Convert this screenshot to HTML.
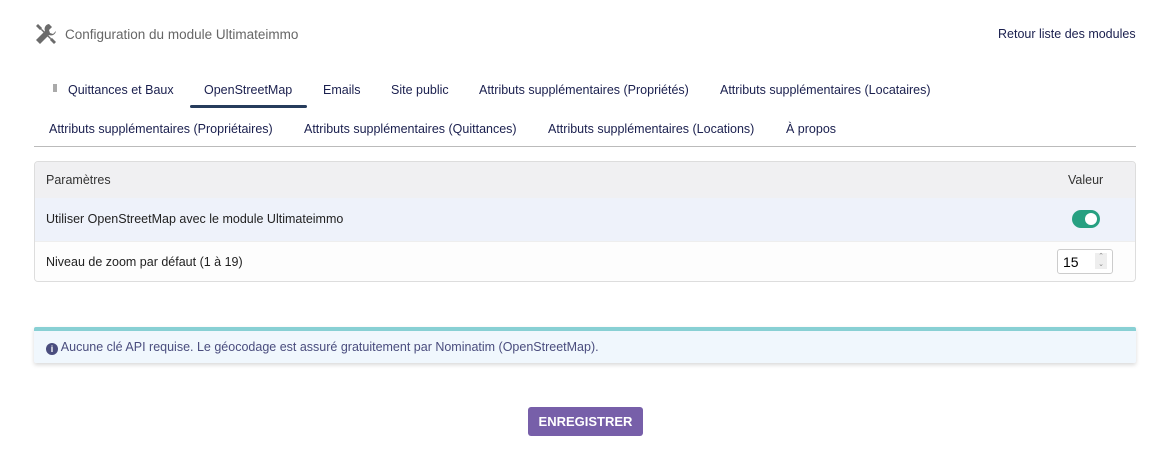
<!DOCTYPE html>
<html><head><meta charset="utf-8"><style>
body{margin:0;width:1168px;height:453px;background:#fff;font-family:"Liberation Sans",sans-serif;font-size:12.5px;color:#222;position:relative;overflow:hidden}
.a{position:absolute;white-space:nowrap}
.tab{position:absolute;color:#1a1f4e;font-size:12.5px;white-space:nowrap}
</style></head><body>
<svg class="a" style="left:35px;top:23px" width="22" height="22" viewBox="0 0 22 22"><g fill="#6b6b6b"><path d="M3 1l4 4-1 2 9 9 2-1 4 4-2 2-4-4 1-2-9-9-2 1-4-4z"/><path d="M14 1a5 5 0 0 0-4 7L1 17l4 4 9-9a5 5 0 0 0 7-4l-3 3-3-1-1-3 3-3z"/></g></svg>
<div class="a" style="left:65px;top:27px;font-size:13.5px;color:#666">Configuration du module Ultimateimmo</div>
<div class="a" style="left:998px;top:27px;color:#1a1f4e">Retour liste des modules</div>
<div class="a" style="left:53px;top:84px;width:4px;height:8px;background:#aaa"></div>
<div class="tab" style="left:68px;top:83px">Quittances et Baux</div>
<div class="tab" style="left:204px;top:83px">OpenStreetMap</div>
<div class="a" style="left:190px;top:105px;width:117px;height:3px;background:#263c5c;border-radius:2px"></div>
<div class="tab" style="left:323px;top:83px">Emails</div>
<div class="tab" style="left:391px;top:83px">Site public</div>
<div class="tab" style="left:479px;top:83px">Attributs supplémentaires (Propriétés)</div>
<div class="tab" style="left:720px;top:83px">Attributs supplémentaires (Locataires)</div>
<div class="tab" style="left:49px;top:122px">Attributs supplémentaires (Propriétaires)</div>
<div class="tab" style="left:304px;top:122px">Attributs supplémentaires (Quittances)</div>
<div class="tab" style="left:548px;top:122px">Attributs supplémentaires (Locations)</div>
<div class="tab" style="left:786px;top:122px">À propos</div>
<div class="a" style="left:34px;top:146px;width:1102px;height:1px;background:#bbb"></div>
<div class="a" style="left:34px;top:161px;width:1100px;height:119px;border:1px solid #ddd;border-radius:4px;overflow:hidden">
<div style="height:36px;background:#f0f0f2;position:relative"><span class="a" style="left:11px;top:11px;color:#333">Paramètres</span><span class="a" style="left:1033px;top:11px;color:#333">Valeur</span></div>
<div style="height:43px;background:#eef2fa;position:relative"><span class="a" style="left:11px;top:14px">Utiliser OpenStreetMap avec le module Ultimateimmo</span>
<div class="a" style="left:1037px;top:12px;width:28px;height:18px;border-radius:9px;background:#27a081"><div style="position:absolute;right:3px;top:3px;width:12px;height:12px;border-radius:50%;background:#fff"></div></div></div>
<div style="height:40px;background:#fdfdfd;position:relative;border-top:1px solid #eee"><span class="a" style="left:11px;top:13px">Niveau de zoom par défaut (1 à 19)</span>
<div class="a" style="left:1022px;top:7px;width:54px;height:23px;border:1px solid #ccc;border-radius:3px;background:#fff"><span class="a" style="left:5px;top:4px;font-size:14px;color:#000">15</span><div class="a" style="left:37px;top:3px;width:12px;height:16px;background:#eee;font-size:7px;color:#888;text-align:center;line-height:8px">⌃<br>⌄</div></div></div>
</div>
<div class="a" style="left:34px;top:327px;width:1102px;height:36px;background:#f0f7fd;border-top:4px solid #88d0d4;box-sizing:border-box;box-shadow:0 2px 4px rgba(0,0,0,.15);border-radius:2px">
<span class="a" style="left:12px;top:9px;color:#4a4d7e"><span style="display:inline-block;width:12px;height:12px;border-radius:50%;background:#4a4d7e;color:#fff;font-size:9px;font-weight:bold;text-align:center;line-height:12px;vertical-align:-1px">i</span> Aucune clé API requise. Le géocodage est assuré gratuitement par Nominatim (OpenStreetMap).</span></div>
<div class="a" style="left:528px;top:407px;width:115px;height:29px;background:#775fa9;border-radius:3px;color:#fff;font-weight:bold;font-size:13px;text-align:center;line-height:29px">ENREGISTRER</div>
</body></html>
